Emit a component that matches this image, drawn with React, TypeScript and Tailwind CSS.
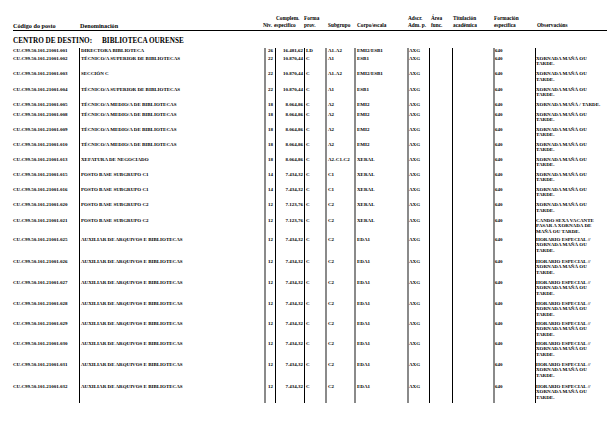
const AUX = "AUXILIAR DE ARQUIVOS E BIBLIOTECAS";
const XMT = ["XORNADA MAÑÁ OU", "TARDE."];
const HES = ["HORARIO ESPECIAL //", "XORNADA MAÑÁ OU", "TARDE."];

const rows = [
  { code: "001", name: "DIRECTORA BIBLIOTECA", niv: "26", comp: "16.481,62", forma: "LD", sub: "A1-A2", corpo: "EMI2/ESB1", obs: [] as string[], h: "h-[7.5px]" },
  { code: "002", name: "TÉCNICO/A SUPERIOR DE BIBLIOTECAS", niv: "22", comp: "10.870,44", forma: "C", sub: "A1", corpo: "ESB1", obs: XMT, h: "h-[15.5px]" },
  { code: "003", name: "SECCIÓN C", niv: "22", comp: "10.870,44", forma: "C", sub: "A1-A2", corpo: "EMI2/ESB1", obs: XMT, h: "h-[15.5px]" },
  { code: "004", name: "TÉCNICO/A SUPERIOR DE BIBLIOTECAS", niv: "22", comp: "10.870,44", forma: "C", sub: "A1", corpo: "ESB1", obs: XMT, h: "h-[15px]" },
  { code: "005", name: "TÉCNICO/A MEDIO/A DE BIBLIOTECAS", niv: "18", comp: "8.064,86", forma: "C", sub: "A2", corpo: "EMI2", obs: ["XORNADA MAÑÁ / TARDE."], h: "h-[10px]" },
  { code: "008", name: "TÉCNICO/A MEDIO/A DE BIBLIOTECAS", niv: "18", comp: "8.064,86", forma: "C", sub: "A2", corpo: "EMI2", obs: XMT, h: "h-[15px]" },
  { code: "009", name: "TÉCNICO/A MEDIO/A DE BIBLIOTECAS", niv: "18", comp: "8.064,86", forma: "C", sub: "A2", corpo: "EMI2", obs: XMT, h: "h-[15px]" },
  { code: "010", name: "TÉCNICO/A MEDIO/A DE BIBLIOTECAS", niv: "18", comp: "8.064,86", forma: "C", sub: "A2", corpo: "EMI2", obs: XMT, h: "h-[15px]" },
  { code: "013", name: "XEFATURA DE NEGOCIADO", niv: "18", comp: "8.064,86", forma: "C", sub: "A2-C1-C2", corpo: "XERAL", obs: XMT, h: "h-[15px]" },
  { code: "015", name: "POSTO BASE SUBGRUPO C1", niv: "14", comp: "7.434,32", forma: "C", sub: "C1", corpo: "XERAL", obs: XMT, h: "h-[15px]" },
  { code: "016", name: "POSTO BASE SUBGRUPO C1", niv: "14", comp: "7.434,32", forma: "C", sub: "C1", corpo: "XERAL", obs: XMT, h: "h-[15.5px]" },
  { code: "020", name: "POSTO BASE SUBGRUPO C2", niv: "12", comp: "7.123,76", forma: "C", sub: "C2", corpo: "XERAL", obs: XMT, h: "h-[15.5px]" },
  { code: "021", name: "POSTO BASE SUBGRUPO C2", niv: "12", comp: "7.123,76", forma: "C", sub: "C2", corpo: "XERAL", obs: ["CANDO SEXA VACANTE", "PASAR A XORNADA DE", "MAÑÁ OU TARDE."], h: "h-[19px]" },
  { code: "025", name: AUX, niv: "12", comp: "7.434,32", forma: "C", sub: "C2", corpo: "EDA1", obs: HES, h: "h-[22px]" },
  { code: "026", name: AUX, niv: "12", comp: "7.434,32", forma: "C", sub: "C2", corpo: "EDA1", obs: HES, h: "h-[21px]" },
  { code: "027", name: AUX, niv: "12", comp: "7.434,32", forma: "C", sub: "C2", corpo: "EDA1", obs: HES, h: "h-[21px]" },
  { code: "028", name: AUX, niv: "12", comp: "7.434,32", forma: "C", sub: "C2", corpo: "EDA1", obs: HES, h: "h-[20px]" },
  { code: "029", name: AUX, niv: "12", comp: "7.434,32", forma: "C", sub: "C2", corpo: "EDA1", obs: HES, h: "h-[20px]" },
  { code: "030", name: AUX, niv: "12", comp: "7.434,32", forma: "C", sub: "C2", corpo: "EDA1", obs: HES, h: "h-[21px]" },
  { code: "031", name: AUX, niv: "12", comp: "7.434,32", forma: "C", sub: "C2", corpo: "EDA1", obs: HES, h: "h-[22px]" },
  { code: "032", name: AUX, niv: "12", comp: "7.434,32", forma: "C", sub: "C2", corpo: "EDA1", obs: HES, h: "h-[19.5px]" },
];

const cols = "grid grid-cols-[66px_185px_11px_29px_21px_29px_53px_22px_23px_41px_42px_72px]";
const dark = "border-l border-black";
const grey = "border-l-2 border-[#8a8a8a]";

function Header() {
  return (
    <div className={`${cols} grid-rows-[7.5px_7.5px] border-b border-black text-[5.3px] leading-[7.5px] whitespace-nowrap`}>
      <div className="col-start-1 row-start-2 text-[6.2px]">Código do posto</div>
      <div className="col-start-2 row-start-2 pl-[1px] text-[6.2px]">Denominación</div>
      <div className="col-start-3 row-start-2 ml-[-1px]">Niv.</div>
      <div className="col-start-4 row-start-1 row-span-2 flex flex-col">
        <span className="pl-[1px]">Complem.</span>
        <span className="ml-[-1px]">especifico</span>
      </div>
      <div className="col-start-5 row-start-1 row-span-2 flex flex-col">
        <span>Forma</span>
        <span>prov.</span>
      </div>
      <div className="col-start-6 row-start-2 pl-[3px]">Subgrupo</div>
      <div className="col-start-7 row-start-2 pl-[3px]">Corpo/escala</div>
      <div className="col-start-8 row-start-1 row-span-2 flex flex-col pl-[1px]">
        <span>Adscr.</span>
        <span>Adm. p.</span>
      </div>
      <div className="col-start-9 row-start-1 row-span-2 flex flex-col pl-[2px]">
        <span>Área</span>
        <span>func.</span>
      </div>
      <div className="col-start-10 row-start-1 row-span-2 flex flex-col pl-[1px]">
        <span>Titulación</span>
        <span>académica</span>
      </div>
      <div className="col-start-11 row-start-1 row-span-2 flex flex-col pl-[1px]">
        <span>Formación</span>
        <span>específica</span>
      </div>
      <div className="col-start-12 row-start-2 pl-[2px]">Observacións</div>
    </div>
  );
}

export default function App() {
  return (
    <div className="min-h-[439px] bg-white text-black font-['Liberation_Serif','Times_New_Roman',serif] font-bold">
      <div className="w-[607px] pl-[13px] pt-[14.5px]">
        <Header />
        <div className="mt-[6px] flex text-[7.2px] leading-[8px]">
          <span>CENTRO DE DESTINO:</span>
          <span className="ml-[10px]">BIBLIOTECA OURENSE</span>
        </div>
        <div className="mt-[3.5px] text-[5px] leading-[5.7px] whitespace-nowrap">
          {rows.map((r) => (
            <div key={r.code} className={`${cols} ${r.h}`}>
              <div>CU.C99.50.101.21001.{r.code}</div>
              <div className={`${dark} pl-[1px]`}>{r.name}</div>
              <div className={`${grey} text-center`}>{r.niv}</div>
              <div className={`${dark} pr-[1px] text-right`}>{r.comp}</div>
              <div className={`${dark} pl-[1px]`}>{r.forma}</div>
              <div className={`${grey} pl-[1px]`}>{r.sub}</div>
              <div className={`${grey} pl-[1px]`}>{r.corpo}</div>
              <div className={`${grey}`}>AXG</div>
              <div className={dark}></div>
              <div className={dark}></div>
              <div className={`${grey}`}>640</div>
              <div className={`${dark} flex flex-col`}>
                {r.obs.map((line) => (
                  <span key={line}>{line}</span>
                ))}
              </div>
            </div>
          ))}
        </div>
      </div>
    </div>
  );
}
